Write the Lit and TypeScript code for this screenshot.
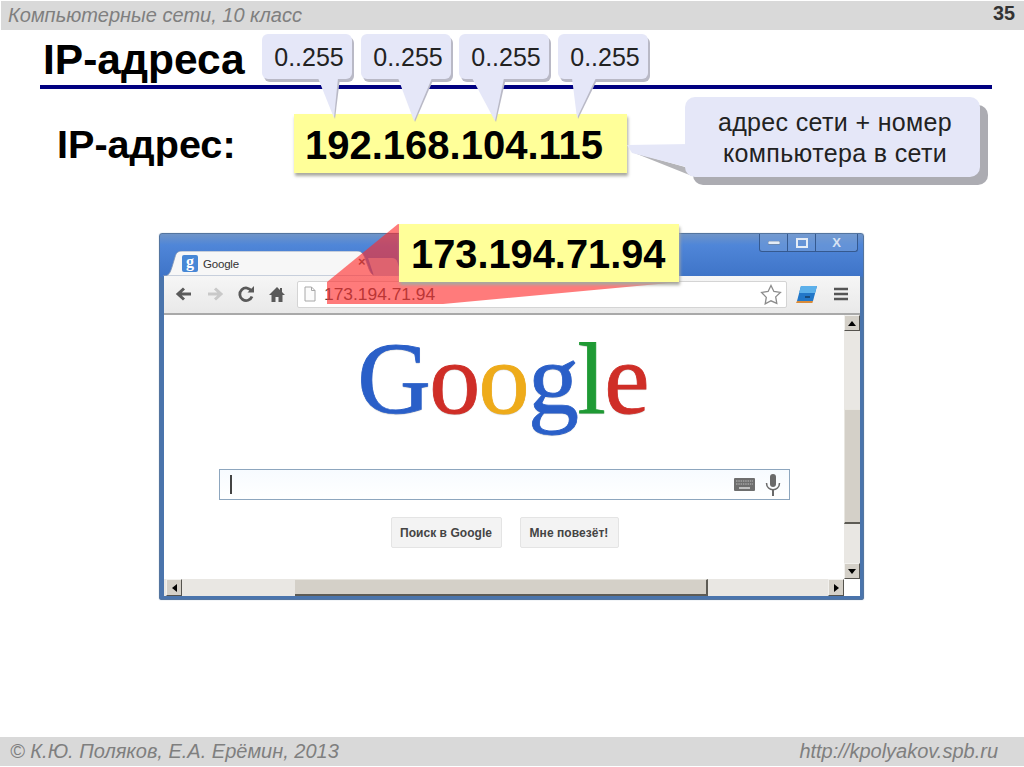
import { LitElement, html, css, svg } from "lit";
import { customElement } from "lit/decorators.js";

const SANS = css`"Liberation Sans", Arial, sans-serif`;

@customElement("app-root")
export class AppRoot extends LitElement {
  static styles = css`
    :host { display: block; width: 1024px; height: 767px; overflow: hidden; background: #fff; font-family: ${SANS}; }
    .page { position: relative; width: 1024px; height: 767px; display: flex; flex-direction: column; }
    .bar { background: #d9d9d9; flex: none; height: 29px; display: flex; align-items: center; justify-content: space-between; font-style: italic; color: #7f7f7f; }
    .top { margin: 1px 0 0 1px; padding: 0 9px 0 7px; font-size: 20px; }
    .num { font-style: normal; font-weight: 700; font-size: 19.8px; color: #333; position: relative; top: -2px; }
    .bottom { margin-bottom: 1px; padding: 0 26px 0 10px; font-size: 20px; height: 29px; }
    main { flex: 1; padding-top: 7px; display: flex; flex-direction: column; }
    h1 { margin: 0 0 2px 43px; font-size: 42.5px; line-height: 46px; font-weight: 700; color: #000; }
    .rule { height: 4px; margin: 0 32px 0 40px; background: #000080; }
    .iprow { display: flex; align-items: center; margin-top: 25px; height: 59px; padding-left: 57px; }
    .iplabel { width: 237px; font-size: 39.6px; font-weight: 700; padding-top: 2px; }
    .yellow { background: #ffff99; box-shadow: 1px 3px 3px #a8a8a0; font-weight: 700; color: #000; display: flex; align-items: center; box-sizing: border-box; padding-top: 3px; }
    .ip1 { width: 333px; height: 59px; padding-left: 11px; font-size: 40px; }

    .browser { margin: 60px 0 0 159px; width: 705px; height: 367px; box-sizing: border-box; border: 1px solid #54759f; border-radius: 3px 3px 2px 2px; background: linear-gradient(#6f94c8 0, #4f86d8 3%, #3f74c8 11.5%, #4a74ac 12%, #4a74ac 100%); padding: 0 3px 3px 4px; display: flex; flex-direction: column; box-shadow: 0 0 1px #7f99bb; }
    .strip { position: relative; height: 42px; flex: none; display: flex; align-items: flex-end; }
    .winbtns { position: absolute; right: 2px; top: 0; height: 18px; width: 99px; display: flex; border: 1px solid #35598f; border-top: 0; border-radius: 0 0 3px 3px; box-sizing: border-box; background: rgba(120,160,215,.5); }
    .winbtns div { display: flex; align-items: center; justify-content: center; border-right: 1px solid #35598f; width: 27px; }
    .winbtns div:last-child { flex: 1; border: 0; color: #d7e3f3; font-size: 13px; font-weight: 700; }
    .tab { position: relative; width: 216px; height: 25px; margin-left: -1px; display: flex; align-items: center; font-size: 11.5px; color: #333; }
    .tab svg.shape { position: absolute; left: 0; top: 0; }
    .fav { position: relative; margin-left: 19px; width: 16px; height: 17px; background: #4787d6; border-radius: 2px; color: #fff; font: 700 16px/14px "Liberation Serif", serif; text-align: center; }
    .tabtitle { position: relative; margin-left: 5px; letter-spacing: -.2px; }
    .tabx { position: absolute; left: 195px; top: 3px; color: #555; font-size: 13px; font-weight: 700; }
    .tab2 { position: relative; width: 28px; height: 18px; margin-left: -8px; background: #a9bfe0; border-radius: 0 4px 0 0; transform: skewX(18deg); }
    .toolbar { flex: none; height: 39px; box-sizing: border-box; background: linear-gradient(#f6f6f6, #e9e9e9); border-bottom: 2px solid #a9a9a9; display: flex; align-items: center; padding: 0 0 1px 4px; }
    .tool { width: 31px; height: 24px; display: flex; align-items: center; justify-content: center; flex: none; }
    .omni { margin-left: 5px; width: 490px; height: 27px; box-sizing: border-box; background: #fff; border: 1px solid #d4d4d4; border-radius: 2px; display: flex; align-items: center; padding-left: 6px; font-size: 17.4px; color: #4a4a4a; }
    .omni .addr { margin-left: 8px; flex: 1; }
    .content { flex: 1; display: grid; grid-template-columns: 1fr 16px; grid-template-rows: 1fr 17px; min-height: 0; background: #fff; }
    .pagebody { display: flex; flex-direction: column; align-items: center; }
    .logo { margin-top: 8px; margin-left: -3px; font: 400 102px/112px "Liberation Serif", serif; letter-spacing: -1.6px; height: 114px; white-space: nowrap; -webkit-text-stroke: .8px currentColor; text-shadow: 0 1px 1px rgba(0,0,0,.2); }
    .b { color: #2a5fc8; } .rd { color: #cf2e27; } .y { color: #eeab1a; } .g { color: #1f9a34; }
    .search { margin-top: 32px; margin-left: 1px; width: 571px; height: 31px; box-sizing: border-box; border: 1.5px solid #8da6be; background: linear-gradient(#f7fbff, #fff); display: flex; align-items: center; padding: 0 8px 0 10px; }
    .caret { width: 1.5px; height: 19px; background: #444; }
    .search .sp { flex: 1; }
    .btns { display: flex; gap: 18px; margin-top: 17px; margin-left: 1px; }
    .btn { height: 31px; box-sizing: border-box; background: #f3f3f3; border: 1px solid #e4e4e4; border-radius: 2px; font-size: 12px; letter-spacing: .05px; font-weight: 700; color: #444; display: flex; align-items: center; justify-content: center; }
    .b1 { width: 111px; } .b2 { width: 99px; }
    .vbar, .hbar { display: flex; background: #e9e7e3; }
    .vbar { flex-direction: column; }
    .sbtn { flex: none; background: #d4d0c8; box-sizing: border-box; border: 1px solid; border-color: #f2f1ee #55534e #55534e #f2f1ee; display: flex; align-items: center; justify-content: center; }
    .vbar .sbtn { height: 16px; }
    .hbar .sbtn { width: 16px; }
    .up { width: 0; border: 4px solid transparent; border-top: 0; border-bottom: 5px solid #000; }
    .dn { width: 0; border: 4px solid transparent; border-bottom: 0; border-top: 5px solid #000; }
    .lf { width: 0; border: 4px solid transparent; border-left: 0; border-right: 5px solid #000; }
    .rt { width: 0; border: 4px solid transparent; border-right: 0; border-left: 5px solid #000; }
    .track { background: #e9e7e3; }
    .vt1 { height: 78px; } .vthumb { height: 115px; } .vt2 { flex: 1; }
    .thumb { background: #d4d0c8; box-sizing: border-box; border-style: solid; border-color: #e8e6e0 #5d5b55 #5d5b55 #e8e6e0; }
    .vthumb { border-width: 1px 0 2px 1px; }
    .hbar { padding-left: 2px; }
    .ht1 { width: 113px; } .hthumb { width: 413px; border-width: 1px 2px 2px 0; } .ht2 { flex: 1; }
    .corner { background: #fff; }

    .over { position: absolute; inset: 0; pointer-events: none; }
    .over svg { position: absolute; left: 0; top: 0; }
    .ip2 { position: absolute; left: 399px; top: 224px; width: 280px; height: 58px; padding-left: 12px; font-size: 39.8px; }
    .label { position: absolute; display: flex; align-items: center; justify-content: center; box-sizing: border-box; color: #222; font-size: 25px; text-align: center; }
    .r0 { left: 262px; } .r1 { left: 361px; } .r2 { left: 459px; } .r3 { left: 558px; }
    .small { top: 34px; width: 90px; height: 46px; padding-left: 4px; padding-top: 1px; }
    .big { left: 685px; top: 97px; width: 295px; height: 80px; line-height: 31px; letter-spacing: .35px; padding: 2px 0 0 5px; }
  `;

  private shapes() {
    const tails: [number, number, number, number, number][] = [
      [262, 318, 338, 334, 118],
      [361, 398, 432, 414, 121],
      [459, 472, 504, 495, 121],
      [558, 572, 596, 577, 118],
    ];
    return svg`
      <polygon points="398,224 327,282 327,304 443,304 680,282" fill="#ff2a2a" fill-opacity=".62"/>
      ${tails.map(([x, a, b, tx, ty]) => svg`
        <rect x=${x + 2} y="37" width="90" height="45" rx="6" fill="#b9b9c6"/>
        <polygon points="${a + 2},78 ${b + 2},78 ${tx + 1},${ty + 1}" fill="#b9b9c6"/>
      `)}
      ${tails.map(([x, a, b, tx, ty]) => svg`
        <rect x=${x} y="34" width="90" height="45" rx="6" fill="#e5e7f8"/>
        <polygon points="${a},78 ${b},78 ${tx},${ty}" fill="#e5e7f8"/>
      `)}
      <polygon points="632,152 692,169 692,176" fill="#b4b4b8"/>
      <rect x="693" y="105" width="295" height="80" rx="10" fill="#acacb2"/>
      <polygon points="627,145 690,144 690,168 632,153" fill="#e5e7f8"/>
      <rect x="685" y="97" width="295" height="80" rx="10" fill="#e5e7f8"/>
    `;
  }

  render() {
    return html`
      <div class="page">
        <div class="bar top"><span>Компьютерные сети, 10 класс</span><span class="num">35</span></div>
        <main>
          <h1>IP-адреса</h1>
          <div class="rule"></div>
          <div class="iprow">
            <div class="iplabel">IP-адрес:</div>
            <div class="yellow ip1">192.168.104.115</div>
          </div>
          <div class="browser">
            <div class="strip">
              <div class="winbtns">
                <div><svg width="12" height="4"><rect width="12" height="3.5" rx="1" fill="#e4ecf6" stroke="#33527e" stroke-width=".5"/></svg></div>
                <div><svg width="12" height="10"><rect x="1" y="1" width="10" height="8" fill="none" stroke="#e4ecf6" stroke-width="2"/></svg></div>
                <div>X</div>
              </div>
              <div class="tab">
                <svg class="shape" width="216" height="25" viewBox="0 0 216 25"><path d="M0 25 C6 25 7 22 9 16 L12 6 C13 2 15 0 19 0 H194 C198 0 200 2 202 7 L206 18 C208 23 210 25 216 25Z" fill="#f7f7f7" stroke="#7d93b3" stroke-width=".8"/></svg>
                <div class="fav">g</div>
                <span class="tabtitle">Google</span>
                <span class="tabx">×</span>
              </div>
              <div class="tab2"></div>
            </div>
            <div class="toolbar">
              <div class="tool"><svg width="18" height="16" viewBox="0 0 18 16"><path d="M16 8H4M9 2.5L3 8l6 5.5" fill="none" stroke="#5a5a5a" stroke-width="3"/></svg></div>
              <div class="tool"><svg width="18" height="16" viewBox="0 0 18 16"><path d="M2 8h12M9 2.5L15 8l-6 5.5" fill="none" stroke="#c9c9c9" stroke-width="3"/></svg></div>
              <div class="tool"><svg width="18" height="18" viewBox="0 0 18 18"><path d="M14.5 6A6.3 6.3 0 1 0 15 11.5" fill="none" stroke="#5a5a5a" stroke-width="2.8"/><path d="M10.5 7.5h6.5v-6.5z" fill="#5a5a5a"/></svg></div>
              <div class="tool"><svg width="18" height="17" viewBox="0 0 18 17"><path d="M9 1L1 9h2.5v7h4v-5h3v5h4V9H17l-3-3V2h-2v2z" fill="#5a5a5a"/></svg></div>
              <div class="omni">
                <svg width="12" height="16" viewBox="0 0 12 16"><path d="M1 1h6.5L11 4.5V15H1z M7.5 1v3.5H11" fill="#fbfbfb" stroke="#a8a8a8"/></svg>
                <span class="addr">173.194.71.94</span>
                <svg width="22" height="21" viewBox="0 0 22 21" style="margin-right:4px"><path d="M11 1.5l2.9 6 6.5.9-4.7 4.5 1.1 6.5L11 16.8l-5.8 3.1 1.1-6.5L1.6 8.4l6.5-.9z" fill="#fff" stroke="#8b8b8b" stroke-width="1.3"/></svg>
              </div>
              <div class="tool" style="margin-left:4px"><svg width="22" height="19" viewBox="0 0 22 19"><path d="M5 1h16l-4 15H1z" fill="#2277c8"/><path d="M5 1h16l-2 7H3z" fill="#5cb0ea"/><path d="M1 16h16l-.6 2H0z" fill="#d98b3a"/><path d="M9 12h5" stroke="#123" stroke-width="1"/></svg></div>
              <div class="tool" style="margin-left:3px"><svg width="14" height="14" viewBox="0 0 14 14"><path d="M0 2h14M0 7h14M0 12h14" stroke="#555" stroke-width="2.6"/></svg></div>
            </div>
            <div class="content">
              <div class="pagebody">
                <div class="logo"><span class="b">G</span><span class="rd">o</span><span class="y">o</span><span class="b">g</span><span class="g">l</span><span class="rd">e</span></div>
                <div class="search">
                  <div class="caret"></div>
                  <div class="sp"></div>
                  <svg width="21" height="13" viewBox="0 0 21 13"><rect width="21" height="13" rx="1" fill="#6e6e6e"/><path d="M2 3h17M2 6h17" stroke="#bdbdbd" stroke-dasharray="1.5 .8"/><path d="M5 10h11" stroke="#ddd" stroke-width="1.5"/></svg>
                  <svg width="16" height="22" viewBox="0 0 16 22" style="margin-left:10px"><rect x="5" y="0" width="6" height="13" rx="3" fill="#6a6a6a"/><path d="M1.5 9c0 9 13 9 13 0" fill="none" stroke="#6a6a6a" stroke-width="1.5"/><path d="M8 15v7" stroke="#6a6a6a" stroke-width="2"/></svg>
                </div>
                <div class="btns">
                  <div class="btn b1">Поиск в Google</div>
                  <div class="btn b2">Мне повезёт!</div>
                </div>
              </div>
              <div class="vbar">
                <div class="sbtn"><div class="up"></div></div>
                <div class="track vt1"></div>
                <div class="thumb vthumb"></div>
                <div class="track vt2"></div>
                <div class="sbtn"><div class="dn"></div></div>
              </div>
              <div class="hbar">
                <div class="sbtn"><div class="lf"></div></div>
                <div class="track ht1"></div>
                <div class="thumb hthumb"></div>
                <div class="track ht2"></div>
                <div class="sbtn"><div class="rt"></div></div>
              </div>
              <div class="corner"></div>
            </div>
          </div>
        </main>
        <div class="bar bottom"><span>© К.Ю. Поляков, Е.А. Ерёмин, 2013</span><span>http://kpolyakov.spb.ru</span></div>
        <div class="over">
          <svg width="1024" height="767" viewBox="0 0 1024 767">${this.shapes()}</svg>
          <div class="yellow ip2">173.194.71.94</div>
          <div class="label small r0">0..255</div>
          <div class="label small r1">0..255</div>
          <div class="label small r2">0..255</div>
          <div class="label small r3">0..255</div>
          <div class="label big">адрес сети + номер<br />компьютера в сети</div>
        </div>
      </div>
    `;
  }
}
